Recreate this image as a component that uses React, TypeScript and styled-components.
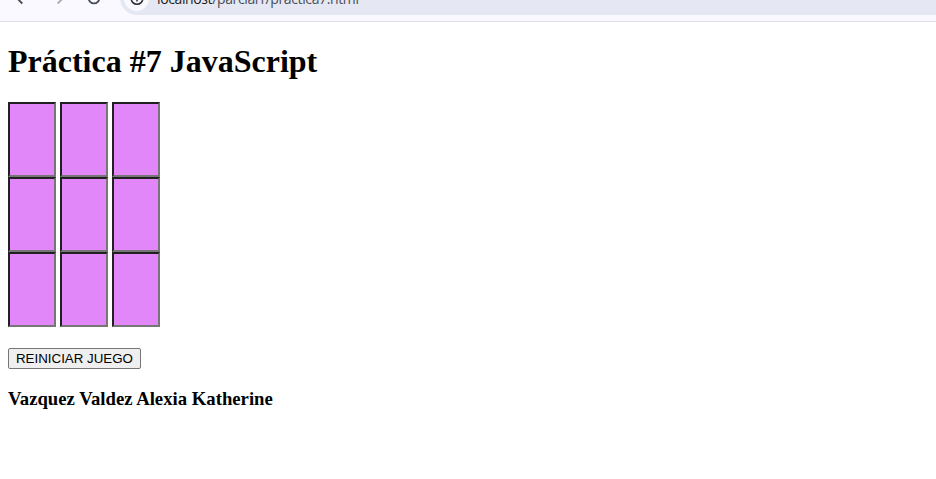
import React from "react";
import styled, { createGlobalStyle } from "styled-components";

const GlobalStyle = createGlobalStyle`
  body { margin: 0; background: #fff; color: #000; overflow: hidden; }
`;

const Toolbar = styled.header`
  height: 21px;
  overflow: hidden;
  display: flex;
  align-items: flex-end;
  background: #f9f9ff;
  border-bottom: 1px solid #dfe0ed;
`;

const NavIcons = styled.svg`
  flex: none;
  width: 120px;
  height: 21px;
  fill: none;
  stroke: #434b5a;
  stroke-width: 1.8;
`;

const AddressBar = styled.div`
  flex: 1;
  box-sizing: border-box;
  height: 34px;
  margin-bottom: 6px;
  padding-left: 4px;
  display: flex;
  align-items: center;
  background: #e5e8f3;
  border-radius: 17px 0 0 17px;
`;

const SiteInfo = styled.span`
  width: 25px;
  height: 25px;
  margin-right: 8px;
  border-radius: 50%;
  background: #f9f9ff;
`;

const Url = styled.span`
  padding-top: 2px;
  font: 14px/20px "Open Sans", "Noto Sans", sans-serif;
  letter-spacing: -0.38px;
  white-space: nowrap;
  color: #4a4d55;
`;

const Host = styled.span`
  color: #1b1c20;
`;

const Page = styled.main`
  padding: 0 8px;
  font-family: "Liberation Serif", serif;
`;

const Title = styled.h1`
  margin: 0;
  padding-top: 21px;
  font-size: 32px;
  line-height: 37px;
`;

const Board = styled.div`
  margin-top: 22px;
  display: grid;
  grid-template-columns: repeat(3, 48px);
  grid-auto-rows: 75px;
  column-gap: 4px;
`;

const Cell = styled.button`
  padding: 0;
  background: #e187f9;
  border: 2px solid;
  border-color: #202020 #767676 #767676 #202020;
`;

const ResetButton = styled.button`
  display: block;
  box-sizing: border-box;
  width: 133px;
  height: 21px;
  margin: 21px 0 0;
  padding: 0;
  font: 13.333px/17px "Liberation Sans", Arial, sans-serif;
  white-space: nowrap;
  color: #000;
  background: #efefef;
  border: 1px solid #767676;
  border-radius: 2px;
`;

const Author = styled.h3`
  margin: 19px 0 0;
  font-size: 18.72px;
  line-height: 22px;
`;

export default function App() {
  return (
    <>
      <GlobalStyle />
      <Toolbar>
        <NavIcons viewBox="0 0 120 21">
          <path d="M22.3 3.5 16.8-2" />
          <path d="M57.7 3.5 63.2-2" stroke="#a9abb3" />
          <circle cx="94" cy="-2" r="5.4" />
        </NavIcons>
        <AddressBar>
          <SiteInfo>
            <svg width="25" height="25" viewBox="0 0 25 25" fill="none" stroke="#2c2e33" strokeWidth="1.5">
              <circle cx="13" cy="12.5" r="5.8" />
              <path d="M13 11.5v4" />
            </svg>
          </SiteInfo>
          <Url>
            <Host>localhost</Host>/parcial1/practica7.html
          </Url>
        </AddressBar>
      </Toolbar>
      <Page>
        <Title>Práctica #7 JavaScript</Title>
        <Board>
          {Array.from({ length: 9 }, (_, i) => (
            <Cell key={i} aria-label={`Casilla ${i + 1}`} />
          ))}
        </Board>
        <ResetButton>REINICIAR JUEGO</ResetButton>
        <Author>Vazquez Valdez Alexia Katherine</Author>
      </Page>
    </>
  );
}
